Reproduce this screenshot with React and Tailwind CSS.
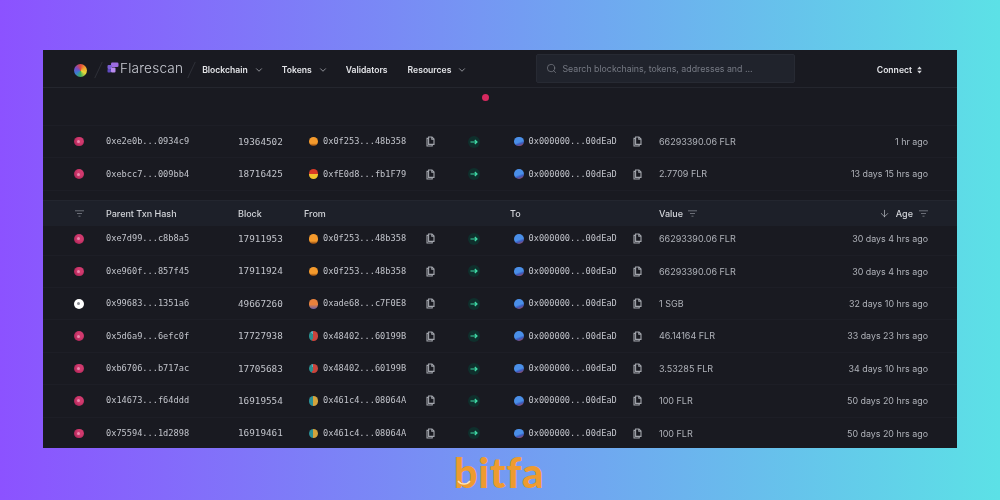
import React from "react";
import { ChevronDown, Search, ArrowDown } from "lucide-react";

const mono = "font-['DejaVu_Sans_Mono',monospace] text-[8.65px] text-[#c2c4cb] whitespace-pre";

const flare = "bg-[radial-gradient(circle_at_60%_40%,#d03a6e_35%,#b02558_75%)]";
const orange = "bg-[linear-gradient(180deg,#f59a2c_70%,#7a3b10_100%)]";
const burn = "bg-[linear-gradient(160deg,#4a8fe8_55%,#3c5cc0_70%,#b5433f_100%)]";
const germany = "bg-[linear-gradient(180deg,#d93a26_0%,#d93a26_45%,#f2c32c_46%,#f2c32c_100%)]";
const ade = "bg-[linear-gradient(180deg,#e8813c_55%,#6a5fa8_100%)]";
const teal = "bg-[conic-gradient(#c9443c_60deg_200deg,#2a8f8f_200deg_330deg,#5fb0c0_330deg_420deg)]";
const gold = "bg-[conic-gradient(#d2a33c_80deg_190deg,#2a8f96_190deg_440deg)]";

const topRows = [
  ["0xe2e0b...0934c9", "19364502", orange, "0x0f253...48b358", "66293390.06 FLR", "1 hr ago"],
  ["0xebcc7...009bb4", "18716425", germany, "0xfE0d8...fb1F79", "2.7709 FLR", "13 days 15 hrs ago"],
];

const rows = [
  ["0xe7d99...c8b8a5", "17911953", orange, "0x0f253...48b358", "66293390.06 FLR", "30 days 4 hrs ago"],
  ["0xe960f...857f45", "17911924", orange, "0x0f253...48b358", "66293390.06 FLR", "30 days 4 hrs ago"],
  ["0x99683...1351a6", "49667260", ade, "0xade68...c7F0E8", "1 SGB", "32 days 10 hrs ago", true],
  ["0x5d6a9...6efc0f", "17727938", teal, "0x48402...60199B", "46.14164 FLR", "33 days 23 hrs ago"],
  ["0xb6706...b717ac", "17705683", teal, "0x48402...60199B", "3.53285 FLR", "34 days 10 hrs ago"],
  ["0x14673...f64ddd", "16919554", gold, "0x461c4...08064A", "100 FLR", "50 days 20 hrs ago"],
  ["0x75594...1d2898", "16919461", gold, "0x461c4...08064A", "100 FLR", "50 days 20 hrs ago"],
];

function CopyIcon() {
  return (
    <svg width="9" height="11" viewBox="0 0 9 11" fill="none" stroke="#a3a6ad" strokeWidth="1.1" className="shrink-0">
      <path d="M2.6 1H6l2 2v5.4H2.6z" />
      <path d="M2.6 2.4H1V10h5.2V8.4" />
      <path d="M5.8 1v2.2H8" />
    </svg>
  );
}

function FilterIcon() {
  return (
    <svg width="9" height="7" viewBox="0 0 9 7" fill="none" stroke="#7f838c" strokeWidth="0.8">
      <path d="M0 0.8h9M2 3.5h5M3.5 6.2h2" />
    </svg>
  );
}

function MoveIcon() {
  return (
    <span className="ml-[33px] flex h-3 w-3 shrink-0 items-center justify-center rounded-full bg-[#0f2f2c]">
      <svg width="8" height="6" viewBox="0 0 8 6" fill="none" stroke="#3fd9a5" strokeWidth="1.2">
        <path d="M0.5 3h6.5M4.8 1l2.2 2-2.2 2" />
      </svg>
    </span>
  );
}

function Row({ row }) {
  const [hash, block, fromIcon, from, value, age, white] = row;
  return (
    <div className="flex h-[32.4px] shrink-0 items-center border-b border-[#1d1e26] pl-[31px] pr-[29px]">
      <span className="flex w-8 shrink-0">
        <span className={`flex h-[9.5px] w-[9.5px] items-center justify-center rounded-full ${white ? "bg-white" : flare}`}>
          <span className={`h-[3px] w-[3px] rounded-full ${white ? "bg-[#8a8c94]" : "bg-[#e98bad]"}`}></span>
        </span>
      </span>
      <span className={`w-[132px] shrink-0 ${mono}`}>{hash}</span>
      <span className="w-[66px] shrink-0 font-['DejaVu_Sans_Mono',monospace] text-[9.3px] text-[#c2c4cb]">{block}</span>
      <span className="flex w-[206px] shrink-0 items-center">
        <span className={`ml-[4.5px] h-[9.5px] w-[9.5px] shrink-0 rounded-full ${fromIcon}`}></span>
        <span className={`ml-[5px] w-[84px] shrink-0 ${mono}`}>{from}</span>
        <span className="ml-[19px]"><CopyIcon /></span>
        <MoveIcon />
      </span>
      <span className="flex w-[149px] shrink-0 items-center">
        <span className={`ml-[4px] h-[9.5px] w-[9.5px] shrink-0 rounded-full ${burn}`}></span>
        <span className={`ml-[5px] w-[90px] shrink-0 ${mono}`}>0x000000...00dEaD</span>
        <span className="ml-[14px]"><CopyIcon /></span>
      </span>
      <span className="font-['Inter',sans-serif] text-[9px] text-[#b0b3ba] whitespace-nowrap">{value}</span>
      <span className="flex-1 text-right font-['Inter',sans-serif] text-[8.9px] text-[#b0b3ba] whitespace-nowrap">{age}</span>
    </div>
  );
}

function NavItem({ label, chevron, className }) {
  return (
    <span className={`flex items-center text-[8.6px] font-semibold text-[#e4e5e9] ${className}`}>
      {label}
      {chevron && <ChevronDown size={10} strokeWidth={1.6} className="ml-[6px] text-[#c9cbd1]" />}
    </span>
  );
}

function BrandMark() {
  return (
    <svg width="12" height="12" viewBox="0 0 12 12" className="shrink-0">
      <rect x="4" y="0.5" width="7.5" height="4.5" rx="1.2" fill="#9c6be0" />
      <rect x="0.5" y="3" width="4.5" height="4" rx="1" fill="#7c5fd6" />
      <rect x="4" y="5.5" width="4.5" height="5" rx="1" fill="#b98bf0" />
      <rect x="0.5" y="7" width="3.5" height="3.5" rx="0.8" fill="#5f4ac0" />
    </svg>
  );
}

export default function App() {
  return (
    <div className="flex h-[500px] w-[1000px] flex-col overflow-hidden bg-[linear-gradient(90deg,#8c52ff,#5ce1e6)] font-['Inter',sans-serif]">
      <div className="mx-[43px] mt-[50px] flex h-[398px] shrink-0 flex-col overflow-hidden bg-[#191a21] blur-[0.35px]">
        <header className="flex h-[38px] shrink-0 items-center border-b border-[#24262e] pl-[31px] pr-[35px] pt-[3px]">
          <span className="h-[13px] w-[13px] shrink-0 rounded-full bg-[conic-gradient(#e0483e,#f0a72e,#e8d93a,#3fae5a,#3a7bd5,#7a4bc0,#e0483e)]"></span>
          <span className="ml-[11px] h-[18px] w-px rotate-[25deg] bg-[#2e3038]"></span>
          <span className="ml-[8px] -mt-[4px]"><BrandMark /></span>
          <span className="ml-[1px] -mt-[4px] font-['Inter',sans-serif] text-[13.6px] font-light tracking-[0.2px] text-[#c9cbd3]">Flarescan</span>
          <span className="ml-[8px] h-[18px] w-px rotate-[25deg] bg-[#2e3038]"></span>
          <NavItem label="Blockchain" chevron className="ml-[10px]" />
          <NavItem label="Tokens" chevron className="ml-[18px]" />
          <NavItem label="Validators" className="ml-[18px]" />
          <NavItem label="Resources" chevron className="ml-[20px]" />
          <div className="-mt-[3px] ml-[69px] flex h-[29px] w-[259px] shrink-0 items-center rounded-[2px] border border-[#272a33] bg-[#20232c] pl-[9px]">
            <Search size={11} strokeWidth={1.3} className="text-[#8b8e96]" />
            <span className="ml-[5px] text-[8.8px] text-[#767a84]">Search blockchains, tokens, addresses and ...</span>
          </div>
          <span className="ml-auto flex items-center text-[8.6px] font-semibold text-[#e4e5e9]">
            Connect
            <svg width="5" height="8" viewBox="0 0 5 8" fill="#d5d6da" className="ml-[5px]">
              <path d="M2.5 0.5L4.8 3.3H0.2zM2.5 7.5L0.2 4.7h4.6z" />
            </svg>
          </span>
        </header>

        <div className="flex h-[38px] shrink-0 items-start border-b border-[#1d1e26] pl-[439px] pt-[6px]">
          <span className="h-[6.5px] w-[6.5px] rounded-full bg-[#d6295f]"></span>
        </div>

        {topRows.map((r) => (
          <Row key={r[0]} row={r} />
        ))}

        <div className="relative z-10 mt-[9px] flex h-[26px] shrink-0 items-center border-t border-[#23262f] bg-[#1d2029] pl-[31px] pr-[29px] text-[9px] font-medium text-[#d3d5da]">
          <span className="flex w-8 shrink-0 pl-px"><FilterIcon /></span>
          <span className="w-[132px] shrink-0">Parent Txn Hash</span>
          <span className="w-[66px] shrink-0">Block</span>
          <span className="w-[206px] shrink-0">From</span>
          <span className="w-[149px] shrink-0">To</span>
          <span className="flex items-center gap-[5px]">Value <FilterIcon /></span>
          <span className="ml-auto flex items-center">
            <ArrowDown size={11} strokeWidth={1.4} className="mr-[6px] text-[#c9cbd1]" />
            Age
            <span className="ml-[6px]"><FilterIcon /></span>
          </span>
        </div>

        <div className="-mt-[2.5px] flex flex-col">
          {rows.map((r) => (
            <Row key={r[0]} row={r} />
          ))}
        </div>
      </div>

      <div className="flex flex-1 items-start justify-center">
        <span className="relative -ml-[2px] font-['Lato',sans-serif] text-[42px] leading-[48px] tracking-[0.6px] font-black text-[#ee9b2f]">
          bitfa
          <svg width="14" height="6" viewBox="0 0 14 6" fill="none" stroke="#fbe3b8" strokeWidth="1.3" className="absolute left-[3px] top-[32px]">
            <path d="M1 1c3 4 9 4 12 0" />
          </svg>
        </span>
      </div>
    </div>
  );
}
